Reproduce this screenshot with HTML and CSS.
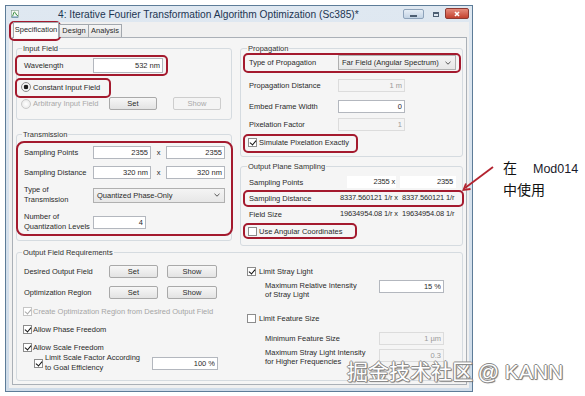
FILE: index.html
```html
<!DOCTYPE html>
<html lang="en">
  <head>
    <meta charset="UTF-8" />
    <title>Iterative Fourier Transformation Algorithm Optimization</title>
    <link rel="stylesheet" href="styles.css">
  </head>
  <body>
    <div class="screen">
      <div class="window">
        <div class="titlebar">
          <svg class="app-icon" viewBox="0 0 8 8">
            <rect x="0.5" y="0.5" width="7" height="7" fill="#f4f8f2" stroke="#7f9a8a" stroke-width="0.6" />
            <path d="M1 6.5 C2 6.5 2.5 2 3.5 2 C4.5 2 5 5.5 7 6" fill="none" stroke="#2f8a3a" stroke-width="1" />
            <path d="M1 7 H7" stroke="#3a6fb0" stroke-width="0.8" />
          </svg>
          <span class="title">4: Iterative Fourier Transformation Algorithm Optimization (Sc385)*</span>
          <div class="controls">
            <span class="ctl ctl-min"><i></i></span>
            <span class="ctl ctl-max"><i></i></span>
            <span class="ctl ctl-close">
              <svg viewBox="0 0 10 8"><path d="M3 2 L7 6 M7 2 L3 6" stroke="#fff" stroke-width="1.6" /></svg>
            </span>
          </div>
        </div>

        <div class="client">
          <div class="tabs">
            <span class="tab active">Specification</span>
            <span class="tab tab-design">Design</span>
            <span class="tab tab-analysis">Analysis</span>
          </div>

          <div class="tabpage">
            <div class="cols">
              <div class="col-left">
                <fieldset class="grp grp-input">
                  <legend>Input Field</legend>
                  <div class="row r-wave">
                    <span class="lbl">Wavelength</span>
                    <input class="tb w-wave" value="532 nm" readonly />
                  </div>
                  <div class="row r-const">
                    <span class="rad on"></span>
                    <span>Constant Input Field</span>
                  </div>
                  <div class="row r-arb">
                    <span class="radio-off"><span class="rad"></span>Arbitrary Input Field</span>
                    <span class="btn">Set</span>
                    <span class="btn btn-off">Show</span>
                  </div>
                </fieldset>

                <fieldset class="grp grp-trans">
                  <legend>Transmission</legend>
                  <div class="row r-sp">
                    <span class="lbl">Sampling Points</span>
                    <input class="tb w-pair" value="2355" readonly />
                    <span class="times">x</span>
                    <input class="tb w-pair2" value="2355" readonly />
                  </div>
                  <div class="row r-sd">
                    <span class="lbl">Sampling Distance</span>
                    <input class="tb w-pair" value="320 nm" readonly />
                    <span class="times">x</span>
                    <input class="tb w-pair2" value="320 nm" readonly />
                  </div>
                  <div class="row r-type">
                    <span class="lbl lbl2">Type of<br />Transmission</span>
                    <div class="dd w-ttype">
                      <span>Quantized Phase-Only</span>
                      <svg class="chev" viewBox="0 0 6 4"><path d="M0.5 0.8 L3 3.2 L5.5 0.8" fill="none" stroke="#444" stroke-width="0.9" /></svg>
                    </div>
                  </div>
                  <div class="row r-quant">
                    <span class="lbl lbl2">Number of<br />Quantization Levels</span>
                    <input class="tb w-quant" value="4" readonly />
                  </div>
                </fieldset>
              </div>

              <div class="col-right">
                <fieldset class="grp grp-prop">
                  <legend>Propagation</legend>
                  <div class="row r-ptype">
                    <span class="lbl lbl-r">Type of Propagation</span>
                    <div class="dd w-ptype">
                      <span>Far Field (Angular Spectrum)</span>
                      <svg class="chev" viewBox="0 0 6 4"><path d="M0.5 0.8 L3 3.2 L5.5 0.8" fill="none" stroke="#444" stroke-width="0.9" /></svg>
                    </div>
                  </div>
                  <div class="row r-pdist">
                    <span class="lbl lbl-r">Propagation Distance</span>
                    <input class="tb w-prop" value="1 m" disabled />
                  </div>
                  <div class="row r-embed">
                    <span class="lbl lbl-r">Embed Frame Width</span>
                    <input class="tb w-prop" value="0" readonly />
                  </div>
                  <div class="row r-pix">
                    <span class="lbl lbl-r">Pixelation Factor</span>
                    <input class="tb w-prop" value="1" disabled />
                  </div>
                  <div class="row r-sim">
                    <span class="chk on"></span>
                    <span>Simulate Pixelation Exactly</span>
                  </div>
                </fieldset>

                <fieldset class="grp grp-ops">
                  <legend>Output Plane Sampling</legend>
                  <div class="row r-osp">
                    <span class="lbl lbl-o">Sampling Points</span>
                    <span class="val v1 fill">2355 x</span>
                    <span class="val v2 fill">2355</span>
                  </div>
                  <div class="row r-osd">
                    <span class="lbl lbl-o">Sampling Distance</span>
                    <span class="val v1">8337.560121 1/r x</span>
                    <span class="val v2">8337.560121 1/r</span>
                  </div>
                  <div class="row r-ofs">
                    <span class="lbl lbl-o">Field Size</span>
                    <span class="val v1">19634954.08 1/r x</span>
                    <span class="val v2">19634954.08 1/r</span>
                  </div>
                  <div class="row r-ang">
                    <span class="chk"></span>
                    <span>Use Angular Coordinates</span>
                  </div>
                </fieldset>
              </div>
            </div>

            <fieldset class="grp grp-req">
              <legend>Output Field Requirements</legend>
              <div class="req-cols">
                <div class="req-left">
                  <div class="row r-desired">
                    <span class="lbl lbl-q">Desired Output Field</span>
                    <span class="btn b-set">Set</span>
                    <span class="btn b-show">Show</span>
                  </div>
                  <div class="row r-optreg">
                    <span class="lbl lbl-q">Optimization Region</span>
                    <span class="btn b-set">Set</span>
                    <span class="btn b-show">Show</span>
                  </div>
                  <div class="row r-create off">
                    <span class="chk on dis"></span>
                    <span>Create Optimization Region from Desired Output Field</span>
                  </div>
                  <div class="row r-phase">
                    <span class="chk on"></span>
                    <span>Allow Phase Freedom</span>
                  </div>
                  <div class="row r-scale">
                    <span class="chk on"></span>
                    <span>Allow Scale Freedom</span>
                  </div>
                  <div class="row r-limit">
                    <span class="chk on"></span>
                    <span class="lbl2 limit-text">Limit Scale Factor According<br />to Goal Efficiency</span>
                    <input class="tb w-eff" value="100 %" readonly />
                  </div>
                </div>

                <div class="req-right">
                  <div class="row r-stray">
                    <span class="chk on"></span>
                    <span>Limit Stray Light</span>
                  </div>
                  <div class="row r-maxrel">
                    <span class="lbl3">Maximum Relative Intensity<br />of Stray Light</span>
                    <input class="tb w-req" value="15 %" readonly />
                  </div>
                  <div class="row r-feat">
                    <span class="chk"></span>
                    <span>Limit Feature Size</span>
                  </div>
                  <div class="row r-minfeat">
                    <span class="lbl3">Minimum Feature Size</span>
                    <input class="tb w-req" value="1 µm" disabled />
                  </div>
                  <div class="row r-maxstray">
                    <span class="lbl3">Maximum Stray Light Intensity<br />for Higher Frequencies</span>
                    <input class="tb w-req" value="0.3" disabled />
                  </div>
                </div>
              </div>
            </fieldset>
          </div>
        </div>
      </div>

      <div class="note">
        <div>在<span class="mod">Mod014</span></div>
        <div>中使用</div>
      </div>
    </div>

    <!-- red callouts drawn over the screenshot -->
    <div class="callout c-tab"></div>
    <div class="callout c-wave"></div>
    <div class="callout c-const"></div>
    <div class="callout c-trans"></div>
    <div class="callout c-ptype"></div>
    <div class="callout c-sim"></div>
    <div class="callout c-osd"></div>
    <div class="callout c-ang"></div>

    <svg class="arrow" viewBox="455 160 45 35">
      <path d="M493 167 L465 188" stroke="#b3232f" stroke-width="1.8" fill="none" />
      <path d="M470.5 189 L463.5 190 L466 183.5" stroke="#b3232f" stroke-width="1.8" fill="none" />
    </svg>

    <div class="watermark">掘金技术社区 <span class="wm-latin">@ KANN</span></div>
  </body>
</html>
```

FILE: styles.css
```css
* {
  box-sizing: border-box;
}
body {
  margin: 0;
  width: 585px;
  height: 396px;
  overflow: hidden;
  position: relative;
  background: #fff;
  font-family: "Liberation Sans", Arial, sans-serif;
  color: #2a2a2a;
}
.screen {
  display: flex;
  align-items: flex-start;
  padding: 5px 0 0 5px;
}

/* window frame */
.window {
  width: 468px;
  border: 1px solid #5d7c98;
  background: linear-gradient(#dfe8f1, #cfdce9);
  padding: 0 3px 3px;
  display: flex;
  flex-direction: column;
}
.titlebar {
  height: 16px;
  display: flex;
  align-items: center;
  padding-left: 2px;
}
.app-icon {
  width: 8px;
  height: 8px;
  flex: none;
}
.title {
  flex: 1;
  padding-left: 39px;
  font-size: 10.2px;
  color: #1d3552;
  white-space: nowrap;
}
.controls {
  display: flex;
  align-self: flex-start;
  margin-top: 3px;
}
.ctl {
  height: 10px;
  display: flex;
  align-items: center;
  justify-content: center;
}
.ctl-min {
  width: 21px;
  border: 1px solid #8ea3ba;
  border-radius: 2px;
  background: linear-gradient(#e6eef6, #c3d3e4);
}
.ctl-min i {
  width: 7px;
  height: 2px;
  margin-top: 3px;
  background: #4d5f73;
}
.ctl-max {
  width: 15px;
  margin-left: 4px;
}
.ctl-max i {
  width: 6px;
  height: 5px;
  border: 1px solid #4d5f73;
  border-top-width: 2px;
}
.ctl-close {
  width: 24px;
  height: 11px;
  margin: -1px 0 0 2px;
  border: 1px solid #8d3a33;
  border-radius: 2px;
  background: linear-gradient(#e58b7c, #c3412f);
}
.ctl-close svg {
  width: 10px;
  height: 8px;
}

/* client area and tabs */
.client {
  height: 366px;
  background: #f0f0f0;
  padding: 0 2px 3px 3px;
}
.tabs {
  display: flex;
  align-items: flex-end;
  height: 15px;
  padding-left: 1px;
  position: relative;
  z-index: 1;
}
.tab {
  height: 13px;
  border: 1px solid #a3a8ae;
  border-bottom: 0;
  background: linear-gradient(#f5f5f5, #e4e4e4);
  font-size: 7.5px;
  line-height: 12px;
  text-align: center;
  white-space: nowrap;
}
.tab.active {
  width: 46px;
  height: 16px;
  margin-bottom: -1px;
  background: #fcfcfc;
  line-height: 14px;
}
.tab-design {
  width: 30px;
}
.tab-analysis {
  width: 33px;
  border-left: 0;
}
.tabpage {
  height: 348px;
  border: 1px solid #aab0b7;
  background: #f5f5f5;
  padding: 5px 3px 0;
}
.cols {
  display: flex;
  align-items: flex-start;
  gap: 8px;
}
.col-left {
  width: 216px;
}
.col-right {
  width: 223px;
}

/* group boxes */
.grp {
  margin: 0;
  min-width: 0;
  border: 1px solid #d5dbe0;
  border-radius: 3px;
  padding: 0 6px 0 7px;
}
.grp legend {
  font-size: 7.5px;
  line-height: 11px;
  padding: 0 1px;
  margin-left: -2px;
  color: #333;
}
.col-right .grp {
  padding-left: 8px;
}
.grp-input {
  padding-bottom: 9px;
}
.grp-trans {
  margin-top: 9px;
  padding-bottom: 8px;
}
.grp-prop {
  padding-bottom: 9px;
}
.grp-ops {
  margin-top: 4px;
  padding-bottom: 9px;
}
.grp-req {
  margin-top: 1px;
  padding-bottom: 7px;
}

/* rows and controls */
.row {
  display: flex;
  align-items: center;
  font-size: 7.5px;
  white-space: nowrap;
}
.lbl {
  width: 69px;
  flex: none;
}
.lbl2 {
  line-height: 10px;
}
.lbl-r {
  width: 89px;
}
.lbl-o {
  width: 91px;
}
.lbl-q {
  width: 85px;
}
.tb {
  height: 13px;
  border: 1px solid #b3b7be;
  background: #fff;
  font: inherit;
  font-size: 7.5px;
  color: #2a2a2a;
  text-align: right;
  padding: 0 2px;
  margin: 0;
  outline: none;
}
.tb:disabled {
  background: #f4f4f4;
  border-color: #dcdcdc;
  color: #9a9a9a;
}
.btn {
  height: 13px;
  width: 48px;
  border: 1px solid #a9a9a9;
  border-radius: 2px;
  background: linear-gradient(#f7f7f7, #e3e3e3);
  text-align: center;
  line-height: 11px;
  flex: none;
}
.btn-off {
  border-color: #cdcdcd;
  background: #f4f4f4;
  color: #a8a8a8;
}
.dd {
  height: 15px;
  border: 1px solid #b0b0b0;
  background: linear-gradient(#f4f4f4, #e7e7e7);
  display: flex;
  align-items: center;
  justify-content: space-between;
  padding: 0 4px 0 3px;
}
.chev {
  width: 6px;
  height: 4px;
}
.rad {
  width: 10px;
  height: 10px;
  flex: none;
  border: 1px solid #8c8c8c;
  border-radius: 50%;
  background: radial-gradient(circle, #fff, #e4e4e4);
}
.rad.on {
  background: radial-gradient(circle, #1c1c1c 0 2px, #f3f3f3 2.6px);
}
.chk {
  width: 9px;
  height: 9px;
  flex: none;
  border: 1px solid #8c8c8c;
  background: #fff;
  position: relative;
}
.chk.on::after {
  content: "";
  position: absolute;
  left: 2px;
  top: 0;
  width: 3px;
  height: 5px;
  border: solid #111;
  border-width: 0 1.6px 1.6px 0;
  transform: rotate(40deg);
}
.chk.dis {
  border-color: #c6c6c6;
}
.chk.dis::after {
  border-color: #a9a9a9;
}

/* input field group */
.r-wave {
  margin-top: 4px;
  height: 15px;
}
.w-wave {
  width: 70px;
  height: 15px;
}
.r-const {
  margin-top: 7px;
  height: 14px;
  margin-left: -3px;
  gap: 2px;
}
.r-arb {
  margin-top: 3px;
  height: 13px;
  margin-left: -3px;
}
.radio-off {
  width: 88px;
  display: flex;
  align-items: center;
  gap: 2px;
  color: #a9a9a9;
}
.radio-off .rad {
  border-color: #c9c9c9;
}
.r-arb .btn-off {
  margin-left: 16px;
}

/* transmission group */
.r-sp {
  margin-top: 6px;
  height: 13px;
}
.r-sd {
  margin-top: 7px;
  height: 13px;
}
.w-pair {
  width: 58px;
}
.w-pair2 {
  width: 59px;
}
.times {
  width: 16px;
  text-align: center;
}
.r-type {
  margin-top: 6px;
  height: 20px;
}
.w-ttype {
  width: 133px;
}
.r-quant {
  margin-top: 7px;
  height: 20px;
}
.w-quant {
  width: 53px;
}

/* propagation group */
.r-ptype {
  margin-top: 1px;
  height: 15px;
}
.w-ptype {
  width: 119px;
}
.r-pdist {
  margin-top: 9px;
  height: 13px;
}
.r-embed {
  margin-top: 8px;
  height: 13px;
}
.r-pix {
  margin-top: 5px;
  height: 13px;
}
.w-prop {
  width: 67px;
}
.r-sim {
  margin-top: 6px;
  height: 10px;
  margin-left: -1px;
  gap: 2px;
}

/* output plane sampling */
.r-osp {
  margin-top: 4px;
  height: 12px;
}
.r-osd,
.r-ofs {
  margin-top: 4px;
  height: 12px;
}
.val {
  text-align: right;
  letter-spacing: -0.15px;
  line-height: 12px;
}
.v1 {
  width: 60px;
  padding-right: 2px;
}
.v2 {
  width: 58px;
  margin-left: 2px;
  padding-right: 3px;
}
.v1.fill {
  width: 51px;
  margin-left: 7px;
  padding-right: 1px;
  background: #fff;
}
.v2.fill {
  margin-left: 4px;
  background: #fff;
}
.r-ang {
  margin-top: 6px;
  height: 10px;
  margin-left: -1px;
  gap: 2px;
}

/* output field requirements */
.req-cols {
  display: flex;
  align-items: flex-start;
}
.req-left {
  width: 223px;
}
.req-right {
  flex: 1;
}
.b-set {
  width: 49px;
}
.b-show {
  width: 50px;
  margin-left: 9px;
}
.r-desired {
  margin-top: 7px;
  height: 13px;
}
.r-optreg {
  margin-top: 8px;
  height: 13px;
}
.r-create,
.r-phase,
.r-scale {
  height: 10px;
  margin-left: -1px;
  gap: 1px;
}
.r-create {
  margin-top: 7px;
  color: #a5a5a5;
}
.r-phase,
.r-scale {
  margin-top: 8px;
}
.r-limit {
  margin-top: 1px;
  height: 20px;
  padding-left: 10px;
}
.limit-text {
  width: 109px;
  padding-left: 2px;
}
.w-eff {
  width: 66px;
}
.r-stray,
.r-feat {
  height: 10px;
  gap: 3px;
}
.r-stray {
  margin-top: 8px;
}
.r-feat {
  margin-top: 14px;
}
.lbl3 {
  width: 114px;
  flex: none;
  line-height: 9px;
}
.w-req {
  width: 65px;
}
.r-maxrel {
  margin-top: 4px;
  padding-left: 18px;
  align-items: flex-start;
}
.r-maxrel .lbl3 {
  margin-top: 1px;
}
.r-minfeat {
  margin-top: 9px;
  height: 13px;
  padding-left: 18px;
}
.r-maxstray {
  margin-top: 3px;
  padding-left: 18px;
  align-items: flex-start;
}
.r-maxstray .tb {
  margin-top: 1px;
}

/* annotation */
.note {
  margin: 152px 0 0 30px;
  font-family: "Noto Sans CJK SC", sans-serif;
  font-size: 14px;
  line-height: 20px;
  color: #111;
}
.mod {
  font-family: "Liberation Sans", Arial, sans-serif;
  font-size: 12.5px;
  margin-left: 16px;
  color: #1a1a2a;
}
.callout {
  position: absolute;
  border: 2px solid #a41a2e;
  border-radius: 5px;
}
.c-tab {
  left: 9px;
  top: 21px;
  width: 52px;
  height: 20px;
}
.c-wave {
  left: 15px;
  top: 55px;
  width: 153px;
  height: 21px;
}
.c-const {
  left: 15px;
  top: 78px;
  width: 96px;
  height: 20px;
}
.c-trans {
  left: 16px;
  top: 141px;
  width: 217px;
  height: 95px;
  border-radius: 8px;
}
.c-ptype {
  left: 243px;
  top: 53px;
  width: 218px;
  height: 20px;
}
.c-sim {
  left: 243px;
  top: 134px;
  width: 115px;
  height: 19px;
}
.c-osd {
  left: 243px;
  top: 190px;
  width: 221px;
  height: 17px;
}
.c-ang {
  left: 243px;
  top: 223px;
  width: 114px;
  height: 16px;
}
.arrow {
  position: absolute;
  left: 455px;
  top: 160px;
  width: 45px;
  height: 35px;
}
.watermark {
  position: absolute;
  left: 347px;
  top: 356px;
  font-family: "Noto Sans CJK SC", sans-serif;
  font-size: 21px;
  line-height: 28px;
  color: #fff;
  white-space: nowrap;
  text-shadow: 1px 0 #8a8a8a, -1px 0 #8a8a8a, 0 1px #8a8a8a, 0 -1px #8a8a8a,
    1px 1px 1px #666;
}
.wm-latin {
  font-family: "Liberation Sans", Arial, sans-serif;
  font-size: 21px;
}
```
